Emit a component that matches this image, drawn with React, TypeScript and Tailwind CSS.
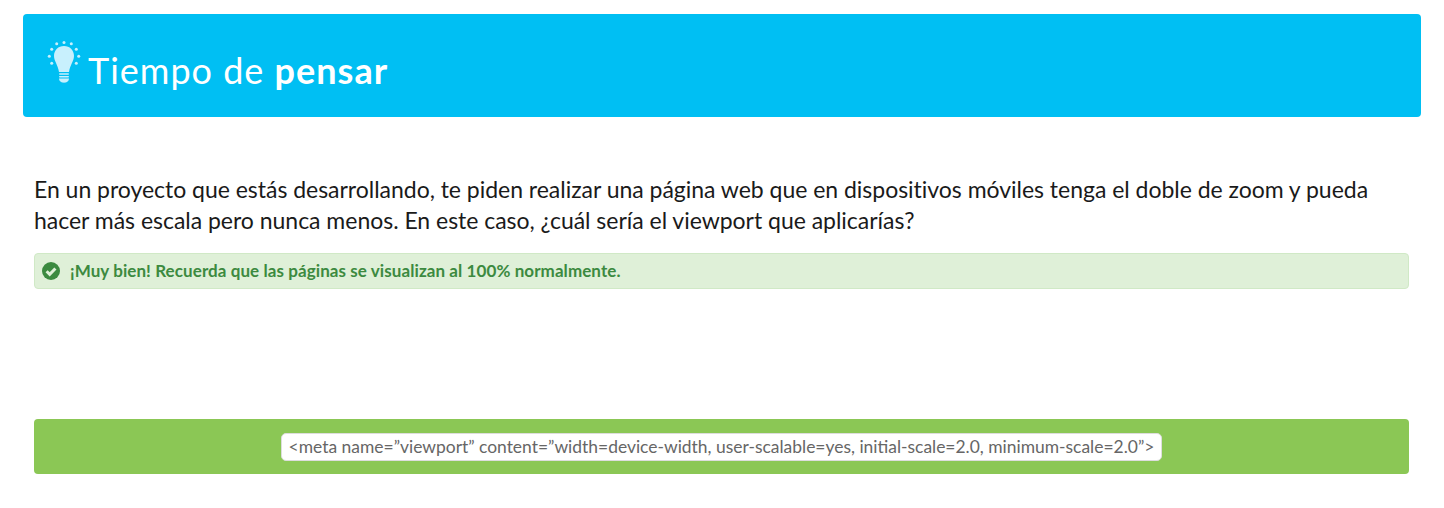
import React from 'react';

const Bulb = () => (
  <svg width="34" height="42" viewBox="0 0 34 42" className="shrink-0" fill="#c8f0fd">
    <circle cx="17" cy="1.5" r="1.5" />
    <circle cx="9.700" cy="2.700" r="1.5" />
    <circle cx="24.300" cy="2.700" r="1.5" />
    <circle cx="4.700" cy="8.300" r="1.5" />
    <circle cx="29.300" cy="8.300" r="1.5" />
    <circle cx="2.300" cy="15.300" r="1.5" />
    <circle cx="31.700" cy="15.300" r="1.5" />
    <circle cx="4.700" cy="22.300" r="1.5" />
    <circle cx="29.300" cy="22.300" r="1.5" />
    <path d="M17 5C11.300 5 7 9.200 7 14.800c0 5.400 3.800 8.700 5 16.200h10c1.200-7.500 5-10.800 5-16.200C27 9.200 22.700 5 17 5z" />
    <rect x="12" y="32.200" width="10" height="1.600" rx=".8" />
    <rect x="12" y="35" width="10" height="1.600" rx=".8" />
    <path d="M12 37.600h10c0 2.400-2.200 4.200-5 4.200s-5-1.800-5-4.200z" />
  </svg>
);

const CheckIcon = () => (
  <svg width="18" height="18" viewBox="0 0 18 18" className="shrink-0">
    <circle cx="9" cy="9" r="9" fill="#3c8a40" />
    <path d="M4.600 9.200l3.100 3.100 5.700-5.800" fill="none" stroke="#dff0d8" strokeWidth="3" />
  </svg>
);

export default function App() {
  return (
    <div className="bg-white h-[508px] pt-[14px] px-[23px] font-['Lato','Open_Sans',sans-serif]">
      <div className="bg-[#00bff3] rounded h-[103px] flex items-center pl-[24px] text-white">
        <div className="-mt-[7px]"><Bulb /></div>
        <h1 className="ml-[7px] mt-[8px] text-[36px] leading-[60px] tracking-[1px]">
          Tiempo de <span className="font-bold">pensar</span>
        </h1>
      </div>

      <div className="pl-[11px] pr-[12px]">
        <p className="mt-[57px] text-[23px] leading-[31px] tracking-[-0.025px] text-[#1a1a1a]">
          En un proyecto que estás desarrollando, te piden realizar una página web que en dispositivos móviles tenga el doble de zoom y pueda hacer más escala pero nunca menos. En este caso, ¿cuál sería el viewport que aplicarías?
        </p>

        <div className="mt-[17px] h-[36px] flex items-center gap-[10px] pl-[7px] bg-[#dff0d8] border border-[#d0e9c6] rounded text-[#3c8a40] text-[17px] font-bold tracking-[0.08px]">
          <CheckIcon />
          <span>¡Muy bien! Recuerda que las páginas se visualizan al 100% normalmente.</span>
        </div>

        <div className="mt-[130px] h-[55px] flex items-center justify-center bg-[#8bc755] rounded">
          <div className="h-[28px] flex items-center px-[7px] pt-[2px] bg-white border border-[#ddd] rounded-[5px] text-[#666] text-[17.45px]">
            &lt;meta name=”viewport” content=”width=device-width, user-scalable=yes, initial-scale=2.0, minimum-scale=2.0”&gt;
          </div>
        </div>
      </div>
    </div>
  );
}
